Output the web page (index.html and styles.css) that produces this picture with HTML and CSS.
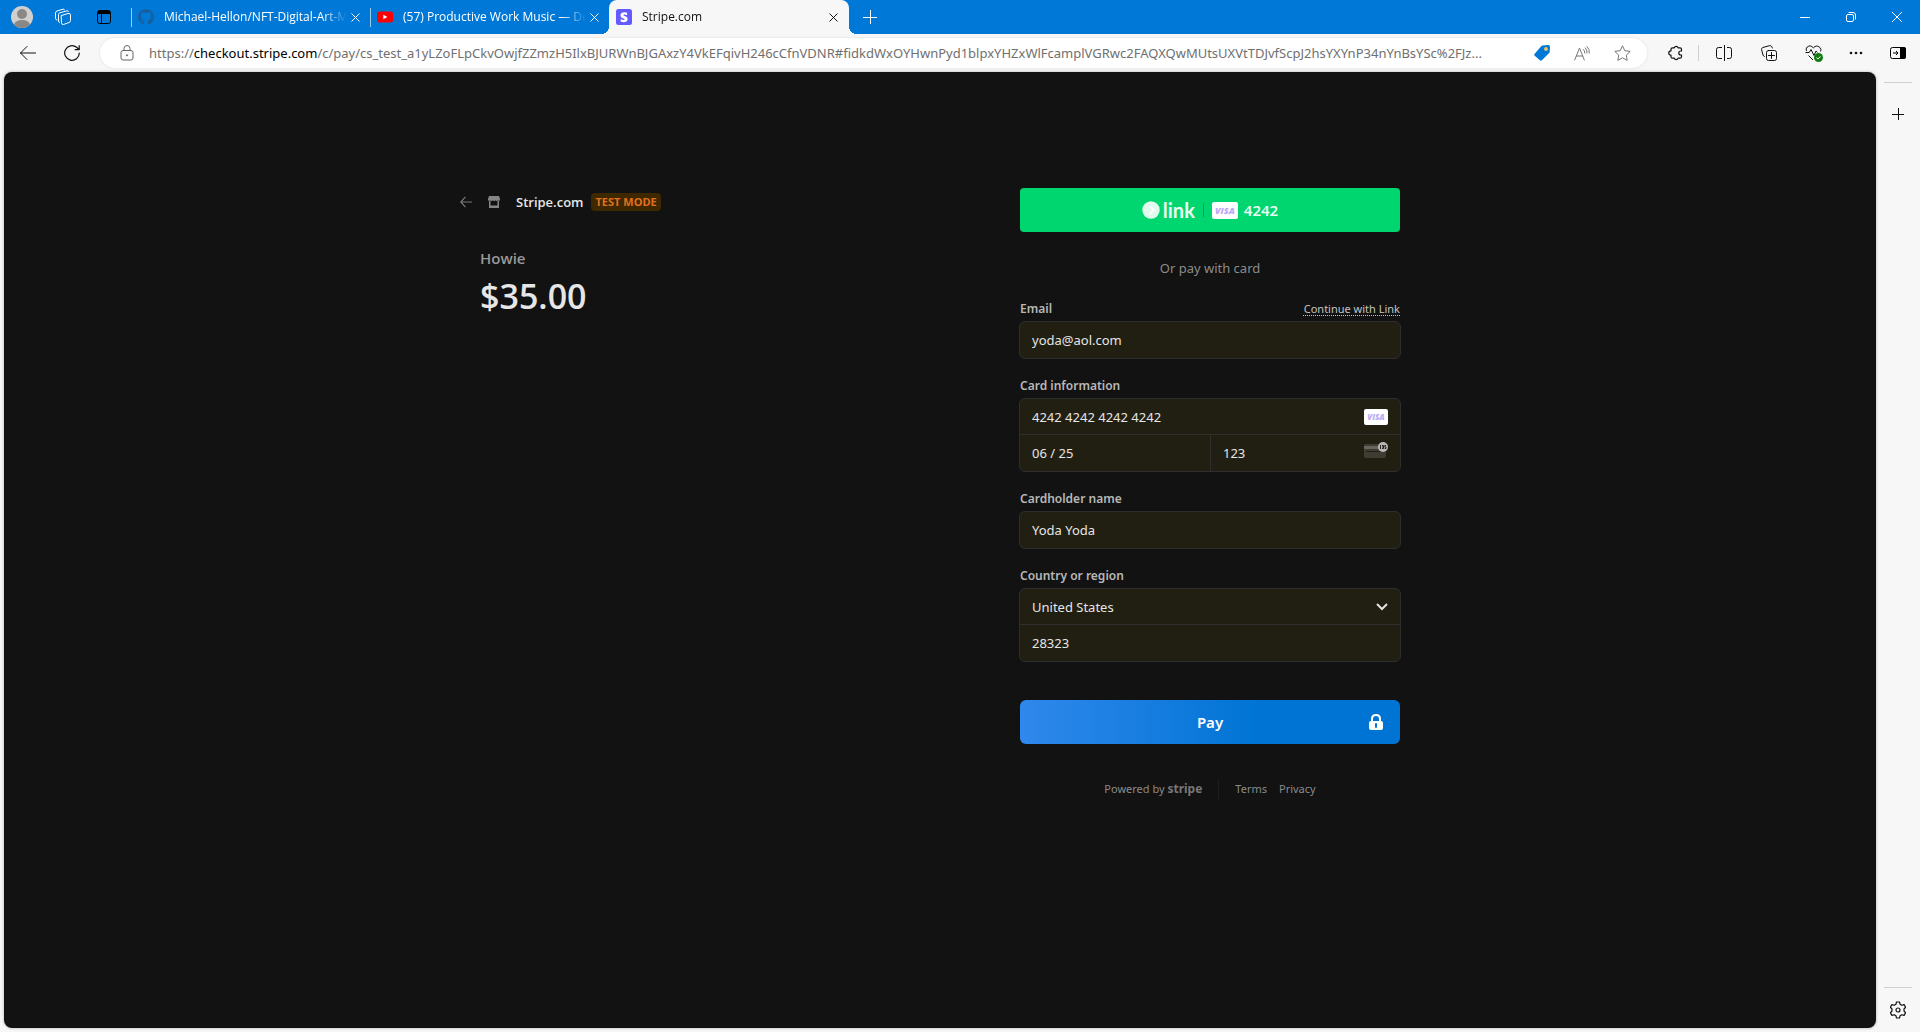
FILE: index.html
```html
<!DOCTYPE html>
<html lang="en">
<head>
<meta charset="utf-8">
<title>Stripe.com</title>
<link rel="stylesheet" href="styles.css">
</head>
<body>
<div class="window">
  <header class="titlebar">
    <button class="title-btn" aria-label="Profile">
      <svg width="22" height="22" viewBox="0 0 22 22"><defs><clipPath id="face"><circle cx="11" cy="11" r="11"/></clipPath></defs><g clip-path="url(#face)"><rect width="22" height="22" fill="#d2d0ce"/><circle cx="11" cy="8" r="5" fill="#8a8886"/><ellipse cx="11" cy="19" rx="8" ry="5" fill="#8a8886"/></g></svg>
    </button>
    <button class="title-btn" aria-label="Workspaces">
      <svg width="18" height="18" viewBox="0 0 18 18" fill="none" stroke="#fff" stroke-linejoin="round" stroke-linecap="round"><path d="M7.500 7.500 14 5.500q2.500-.6 2.500 1.500v5.500q0 1.500-1.500 2l-5.500 2q-2 .5-2-1.500z"/><path d="M5.500 14.500q-1-.2-1-1.500V6.500q0-1.300 1.300-1.700L13 2.800q1-.1 1.300.7M3 12q-1.500-.2-1.500-1.500V5q0-1.500 1.500-2L9 1.200q1-.2 1.500.5"/></svg>
    </button>
    <button class="title-btn" aria-label="Tab actions">
      <svg width="14" height="14" viewBox="0 0 14 14" fill="none" stroke="#000"><rect x=".5" y=".5" width="13" height="13" rx="2"/><path d="M1 2.500h12" stroke-width="3"/><path d="M4.500 4v9"/></svg>
    </button>
    <nav class="tabs" aria-label="Tabs">
      <div class="tab">
        <svg class="favicon" viewBox="0 0 16 16" fill="#17609f"><path d="M8 0C3.580 0 0 3.580 0 8c0 3.540 2.290 6.530 5.470 7.590.4.070.55-.17.55-.38 0-.19-.01-.82-.01-1.490-2.010.37-2.530-.49-2.690-.94-.09-.23-.48-.94-.82-1.130-.28-.15-.68-.52-.01-.53.63-.01 1.080.58 1.230.82.72 1.210 1.870.87 2.330.66.07-.52.28-.87.51-1.070-1.780-.2-3.640-.89-3.640-3.950 0-.87.31-1.590.82-2.150-.08-.2-.36-1.020.08-2.120 0 0 .67-.21 2.200.82.64-.18 1.320-.27 2-.27s1.360.09 2 .27c1.530-1.040 2.200-.82 2.200-.82.44 1.100.16 1.920.08 2.120.51.56.82 1.270.82 2.150 0 3.070-1.870 3.750-3.650 3.950.29.25.54.73.54 1.480 0 1.070-.01 1.930-.01 2.200 0 .21.15.46.55.38A8.010 8.010 0 0 0 16 8c0-4.420-3.580-8-8-8z"/></svg>
        <button class="tab-name">Michael-Hellon/NFT-Digital-Art-M</button>
        <button class="tab-close" aria-label="Close tab"><svg width="9" height="9" viewBox="0 0 9 9" fill="none" stroke="currentColor"><path d="m.5.5 8 8m0-8-8 8"/></svg></button>
      </div>
      <div class="tab">
        <svg class="favicon" viewBox="0 0 16 16"><rect y="2.500" width="16" height="11" rx="2.500" fill="red"/><path d="M6.300 5.700v4.600L10.400 8z" fill="#fff"/></svg>
        <button class="tab-name">(57) Productive Work Music — De</button>
        <button class="tab-close" aria-label="Close tab"><svg width="9" height="9" viewBox="0 0 9 9" fill="none" stroke="currentColor"><path d="m.5.5 8 8m0-8-8 8"/></svg></button>
      </div>
      <div class="tab active">
        <svg class="favicon" viewBox="0 0 16 16"><rect width="16" height="16" rx="2.500" fill="#635bff"/><path d="M7.400 6.200c0-.4.300-.6.900-.6.800 0 1.900.3 2.800.7V3.700a7 7 0 0 0-2.800-.5C6 3.200 4.500 4.400 4.500 6.400c0 3.100 4.200 2.600 4.200 3.900 0 .5-.4.600-1 .6-.9 0-2.100-.4-3-.9v2.600c1 .4 2 .6 3 .6 2.300 0 3.900-1.100 3.900-3.200 0-3.300-4.200-2.700-4.200-3.800z" fill="#fff"/></svg>
        <button class="tab-name">Stripe.com</button>
        <button class="tab-close" aria-label="Close tab"><svg width="9" height="9" viewBox="0 0 9 9" fill="none" stroke="currentColor"><path d="m.5.5 8 8m0-8-8 8"/></svg></button>
      </div>
    </nav>
    <button class="title-btn" aria-label="New tab"><svg width="14" height="14" viewBox="0 0 14 14" fill="none" stroke="#fff"><path d="M7.500 0v14M0 7.500h14"/></svg></button>
    <div class="window-controls">
      <button aria-label="Minimize"><svg width="10" height="10" viewBox="0 0 10 10" fill="none" stroke="#fff"><path d="M0 5.500h10"/></svg></button>
      <button aria-label="Restore"><svg width="10" height="10" viewBox="0 0 10 10" fill="none" stroke="#fff"><rect x=".5" y="2.500" width="7" height="7" rx="1.500"/><path d="M2.500.5H7q2.500 0 2.500 2.500v4.500"/></svg></button>
      <button aria-label="Close"><svg width="10" height="10" viewBox="0 0 10 10" fill="none" stroke="#fff"><path d="m0 0 10 10M10 0 0 10"/></svg></button>
    </div>
  </header>

  <div class="toolbar">
    <button class="tool tool-nav" aria-label="Back"><svg width="16" height="14" viewBox="0 0 16 14" fill="none" stroke="#111" stroke-linecap="round" stroke-linejoin="round"><path d="M7 .5.5 7 7 13.500M.5 7h15"/></svg></button>
    <button class="tool tool-nav" aria-label="Refresh"><svg width="16" height="16" viewBox="0 0 16 16" fill="none" stroke="#111" stroke-width="1.200" stroke-linecap="round" stroke-linejoin="round"><path d="M15.300 8A7.300 7.300 0 1 1 12.600 2.300L15 4.500M15.200.7v4h-4"/></svg></button>
    <div class="address">
      <button class="site-info" aria-label="View site information"><svg width="14" height="16" viewBox="0 0 14 16" fill="none" stroke="#666"><rect x="1" y="5.500" width="12" height="9.500" rx="2"/><path d="M4 5.500V3.500q0-3 3-3t3 3v2"/><circle cx="7" cy="10.300" r=".6" fill="#666"/></svg></button>
      <div class="url">https://<span class="url-host">checkout.stripe.com</span>/c/pay/cs_test_a1yLZoFLpCkvOwjfZZmzH5IlxBJURWnBJGAxzY4VkEFqivH246cCfnVDNR#fidkdWxOYHwnPyd1blpxYHZxWlFcamplVGRwc2FAQXQwMUtsUXVtTDJvfScpJ2hsYXYnP34nYnBsYSc%2FJz...</div>
      <button class="address-btn" aria-label="Shopping"><svg width="16" height="16" viewBox="0 0 16 16"><path d="M8.500.5 14 0q2-.1 2 2l-.3 4.500q0 1-.8 1.800l-7 7q-1 .9-2 0L.7 10.800q-1-1 0-2l6.500-7.500q.5-.7 1.300-.8z" fill="#0078d7"/><circle cx="12" cy="4" r="1.900" fill="#f5c35b"/></svg></button>
      <button class="address-btn" aria-label="Read aloud"><svg width="16" height="15" viewBox="0 0 16 15" fill="none" stroke="#777" stroke-linecap="round"><path d="M.7 14 5.500 2l4.800 12M2.300 10h6.400M9.500 3.500q1.500 1.300 1.300 3.500M11.300 1.900q2.200 2 1.700 5M13 .5q3 2.500 2.300 6.500"/></svg></button>
      <button class="address-btn" aria-label="Add to favorites"><svg width="17" height="16" viewBox="0 0 17 16" fill="none" stroke="#777" stroke-linejoin="round"><path d="m8.500.8 2.300 4.900 5.400.7-3.900 3.700.9 5.300-4.700-2.600-4.700 2.600.9-5.300L.8 6.400l5.400-.7z"/></svg></button>
    </div>
    <button class="tool" aria-label="Extensions"><svg width="16" height="16" viewBox="0 0 16 16" fill="none" stroke="#111" stroke-width="1.200" stroke-linejoin="round"><path d="M3 5.800V4.300q0-1.500 1.500-1.500h1.800a2 2 0 0 1 3.800 0H12q1.500 0 1.500 1.500V6h-.7a2 2 0 0 0 0 4h.7v1.700q0 1.500-1.500 1.500h-1.900a2 2 0 0 1-3.800 0H4.500q-1.500 0-1.500-1.500v-1.500a2.200 2.200 0 0 1 0-4.400z"/></svg></button>
    <span class="tool-divider"></span>
    <button class="tool" aria-label="Split screen"><svg width="16" height="16" viewBox="0 0 16 16" fill="none" stroke="#111"><path d="M8.500 0v16M6 2.500H2.500q-2 0-2 2v7q0 2 2 2H6M11 2.500h2.500q2 0 2 2v7q0 2-2 2H11"/></svg></button>
    <button class="tool" aria-label="Collections"><svg width="16" height="16" viewBox="0 0 16 16" fill="none" stroke="#111" stroke-linecap="round"><rect x="5.500" y="5.500" width="10" height="10" rx="2"/><path d="M10.500 7.500v6M7.500 10.500h6M3.300 11.500q-1-.3-1.300-1.500L.6 4.800Q.2 3 1.800 2.500L8.500.7q1.700-.4 2.300 1L11.300 3"/></svg></button>
    <button class="tool" aria-label="Browser essentials"><svg width="18" height="17" viewBox="0 0 18 17" fill="none" stroke="#111" stroke-linejoin="round"><path d="M1.500 6Q.4 3.800 2.200 2q3.300-2.600 6.100.9 3.200-3.400 6.400-.6 2 2 .9 4.200M3.500 10.500l4.500 4.500M.5 7.500h3.700l1.800-3 3 6 2-4.500 1.500 1.500"/><circle cx="13.500" cy="12.500" r="4.500" fill="#107c10" stroke="none"/><path d="m11.500 12.700 1.400 1.300 2.600-2.600" stroke="#fff"/></svg></button>
    <button class="tool tool-menu" aria-label="Settings and more"><svg width="14" height="4" viewBox="0 0 14 4" fill="#111"><circle cx="2" cy="2" r="1.300"/><circle cx="7" cy="2" r="1.300"/><circle cx="12" cy="2" r="1.300"/></svg></button>
    <button class="tool tool-edge" aria-label="Toggle sidebar"><svg width="16" height="12" viewBox="0 0 16 12"><rect x=".5" y=".5" width="15" height="11" rx="2" fill="none" stroke="#000"/><path d="M10 0h4q2 0 2 2v8q0 2-2 2h-4z"/><path d="M3 6h5M6 4l2 2-2 2" fill="none" stroke="#000"/></svg></button>
  </div>

  <div class="body">
    <main class="page">
      <div class="checkout">
        <section class="summary">
          <div class="merchant">
            <a class="merchant-back" href="#" aria-label="Back"><svg width="12" height="12" viewBox="0 0 12 12" fill="none" stroke="#777" stroke-width="1.200"><path d="M5.500.8.8 6l4.700 5.200M.8 6H12"/></svg></a>
            <svg class="store" width="12" height="12" viewBox="0 0 12 12" fill="#858585"><path d="M1 0h10l1 3v1q-.8 1.300-2 .6-1.300.9-2.600 0-1.400.9-2.800 0-1.300.9-2.600 0-1.200.7-2-.6V3z"/><path d="M1 5h1.500v4.500h7V5H11v7H1z"/></svg>
            <h1 class="merchant-name">Stripe.com</h1>
            <span class="badge">TEST MODE</span>
          </div>
          <h2 class="product">Howie</h2>
          <p class="amount">$35.00</p>
        </section>

        <form class="payment">
          <button class="link-pay" type="button" aria-label="Pay with Link, Visa 4242">
            <svg width="18" height="18" viewBox="0 0 18 18"><circle cx="9" cy="9" r="8.700" fill="#e0fbed"/><path d="M7 4.500h2.500Q10.500 7.500 13.500 9q-3 1.500-4 4.500H7q1-3 3.500-4.500Q8 7.500 7 4.500z" fill="#fff"/></svg>
            <span class="link-word">link</span>
            <span class="link-divider"></span>
            <span class="visa visa-large">VISA</span>
            <span class="last4">4242</span>
          </button>
          <p class="or">Or pay with card</p>

          <div class="group">
            <div class="label-row"><label for="email">Email</label><a href="#" class="continue">Continue with Link</a></div>
            <div class="box"><input id="email" type="email" value="yoda@aol.com"></div>
          </div>

          <div class="group">
            <div class="label-row"><label for="card">Card information</label></div>
            <div class="box">
              <div class="row"><input id="card" value="4242 4242 4242 4242"><span class="visa">VISA</span></div>
              <div class="row split">
                <div class="cell"><input aria-label="Expiration" value="06 / 25"></div>
                <div class="cell"><input aria-label="CVC" value="123">
                  <svg width="24" height="22" viewBox="0 0 24 22"><rect y="2" width="22" height="14" rx="2" fill="#3e3c33"/><path d="M0 4h22v3H0z" fill="#67655e"/><path d="M2 9h14v1H2z" fill="#211f12"/><circle cx="19" cy="5" r="5" fill="#b9b8b4"/><path d="M16.500 3v4M18 3.500h1.500v3H18m0-1.500h1.500M22 3.500h-1.200V5H22v1.500h-1.300" fill="none" stroke="#222"/></svg>
                </div>
              </div>
            </div>
          </div>

          <div class="group">
            <div class="label-row"><label for="name">Cardholder name</label></div>
            <div class="box"><input id="name" value="Yoda Yoda"></div>
          </div>

          <div class="group">
            <div class="label-row"><label for="country">Country or region</label></div>
            <div class="box">
              <div class="row"><select id="country"><option>United States</option></select><svg class="chevron" width="12" height="8" viewBox="0 0 12 8" fill="none" stroke="#e2e2e0" stroke-width="2"><path d="m1 1 5 5 5-5"/></svg></div>
              <div class="row"><input aria-label="ZIP" value="28323"></div>
            </div>
          </div>

          <button class="pay" type="button"><span>Pay</span>
            <svg width="14" height="16" viewBox="0 0 14 16"><path d="M3 8V5q0-4 4-4t4 4v3" fill="none" stroke="#fff" stroke-width="2"/><rect y="7" width="14" height="9" rx="2" fill="#fff"/><path d="M7 10v3" stroke="#0074d4" stroke-width="2" stroke-linecap="round"/></svg>
          </button>

          <footer class="legal">
            <a href="#" class="powered">Powered by <b>stripe</b></a>
            <span class="legal-divider"></span>
            <a href="#">Terms</a>
            <a href="#" class="privacy">Privacy</a>
          </footer>
        </form>
      </div>
    </main>
    <aside class="sidebar">
      <hr>
      <button aria-label="Customize"><svg width="12" height="12" viewBox="0 0 12 12" fill="none" stroke="#111"><path d="M6.500 0v12M0 6.500h12"/></svg></button>
      <hr class="bottom-rule">
      <button aria-label="Settings"><svg width="16" height="18" viewBox="0 0 16 18" fill="none" stroke="#111" stroke-width="1.200" stroke-linejoin="round"><path d="M6.500 1h3l.6 2.300 1.700 1 2.300-.7 1.500 2.600L14 8v2l1.600 1.800-1.500 2.600-2.300-.7-1.700 1L9.500 17h-3l-.6-2.300-1.700-1-2.300.7-1.500-2.600L2 10V8L.4 6.200l1.500-2.600 2.300.7 1.700-1z"/><circle cx="8" cy="9" r="2"/></svg></button>
    </aside>
  </div>
</div>
</body>
</html>
```
FILE: styles.css
```css
* { box-sizing: border-box; }

body {
  margin: 0;
  background: #f7f7f7;
  color: #111;
  font: 12px/16px "Open Sans", "Noto Sans", sans-serif;
}

button, input, select { font: inherit; color: inherit; }
button { padding: 0; border: 0; background: none; }
svg { display: block; flex: none; }
h1, h2, p { margin: 0; }

.window { display: flex; flex-direction: column; min-height: 100vh; }

/* Title bar and tabs */
.titlebar { display: flex; height: 34px; background: #0078d7; color: #fff; }
.title-btn { display: grid; place-items: center; width: 41px; padding-bottom: 1px; }
.title-btn:first-child { margin-left: 1px; }
.tabs { display: flex; margin-left: 7px; }
.tab {
  position: relative;
  display: flex;
  align-items: center;
  width: 239px;
  padding: 0 7px;
}
.tab:not(.active)::before {
  content: "";
  position: absolute;
  left: 0;
  top: 8px;
  width: 1px;
  height: 19px;
  background: #9ccbf0;
}
.tab.active { width: 240px; padding-right: 8px; background: #f7f7f7; color: #111; border-radius: 8px 8px 0 0; }
.tab.active::before, .tab.active::after {
  content: "";
  position: absolute;
  bottom: 0;
  width: 8px;
  height: 8px;
}
.tab.active::before { left: -8px; background: radial-gradient(circle at 0 0, #0078d7 8px, #f7f7f7 8px); }
.tab.active::after { right: -8px; background: radial-gradient(circle at 100% 0, #0078d7 8px, #f7f7f7 8px); }
.favicon { width: 16px; height: 16px; }
.tab-name {
  flex: 1;
  min-width: 0;
  margin: 0 0 0 10px;
  overflow: hidden;
  white-space: nowrap;
  text-align: left;
  mask-image: linear-gradient(90deg, #000 calc(100% - 24px), transparent);
}
.tab-close { display: grid; place-items: center; width: 16px; height: 16px; }
.window-controls { display: flex; margin-left: auto; }
.window-controls button { display: grid; place-items: center; width: 46px; }

/* Toolbar */
.toolbar { display: flex; align-items: center; height: 38px; padding-left: 6px; }
.tool { display: grid; place-items: center; width: 45px; height: 30px; }
.tool-nav { width: 44px; }
.tool-menu { width: 40px; }
.tool-edge { width: 44px; }
.tool-divider { width: 1px; height: 16px; margin-right: 2px; background: #cfcfcf; }
.address {
  display: flex;
  flex: 1;
  align-items: center;
  min-width: 0;
  height: 30px;
  margin: 0 6px;
  padding: 0 5px;
  border-radius: 15px;
  background: #fff;
  box-shadow: 0 0 3px #0000001a;
}
.site-info { display: grid; place-items: center; width: 44px; }
.url {
  flex: 1;
  min-width: 0;
  overflow: hidden;
  white-space: nowrap;
  color: #707070;
  font: 13px/20px "Noto Sans", sans-serif;
}
.url-host { color: #000; }
.address-btn { display: grid; place-items: center; width: 40px; height: 30px; }

/* Page and browser sidebar */
.body { display: flex; flex: 1; padding: 0 0 4px 4px; }
.page {
  flex: 1;
  padding: 116px 24px 40px;
  border-radius: 8px;
  background: #121212;
  box-shadow: 0 0 3px #0000004d;
  color: #e6e6e6;
}
.sidebar { display: flex; flex-direction: column; align-items: center; width: 44px; padding-top: 10px; }
.sidebar hr { width: 28px; margin: 0; border: 0; border-top: 1px solid #cfcfcf; }
.sidebar .bottom-rule { margin-top: auto; }
.sidebar button { display: grid; place-items: center; width: 40px; height: 36px; margin-top: 13px; }
.sidebar .bottom-rule + button { margin-top: 4px; }

.checkout { display: grid; grid-template-columns: 380px 380px; justify-content: center; gap: 160px; }

/* Order summary */
.merchant { display: flex; align-items: center; height: 28px; margin-left: -20px; }
.store { margin: 0 16px; }
.merchant-name { font-size: 13px; line-height: 20px; font-weight: 600; }
.badge {
  margin-left: 8px;
  padding: 1px 4px;
  border-radius: 4px;
  background: #3d2800;
  color: #e36f1e;
  font-size: 11px;
  font-weight: 700;
}
.product { margin-top: 30px; color: #999; font-size: 15px; line-height: 24px; font-weight: 600; }
.amount { margin-top: 4px; font-size: 34px; line-height: 44px; font-weight: 600; }

/* Payment form */
.payment { display: flex; flex-direction: column; font-family: "Noto Sans", sans-serif; }
.link-pay {
  display: flex;
  align-items: center;
  justify-content: center;
  height: 44px;
  border-radius: 4px;
  background: #00d66f;
  color: #e9fff3;
}
.link-word { margin-left: 3px; font: 700 20px/24px Lato, sans-serif; }
.link-divider { width: 1px; height: 14px; margin: 0 8px; background: #00a355; }
.last4 { margin-left: 6px; font-size: 15px; font-weight: 600; }
.visa {
  flex: none;
  width: 24px;
  border-radius: 2px;
  background: #fff;
  color: #bba8f7;
  font: italic 800 8px/16px "Open Sans", sans-serif;
  text-align: center;
}
.visa-large { width: 26px; font-size: 9px; line-height: 17px; }
.or { margin: 26px 0 4px; color: #8c8c8c; font-size: 13px; line-height: 20px; text-align: center; }

.group { margin-top: 19px; }
.label-row { display: flex; justify-content: space-between; margin-bottom: 4px; color: #b8b8b8; font-size: 12px; }
.label-row label { font-weight: 600; }
.continue { color: #c4c4c4; font-size: 11px; text-decoration: underline dotted; text-underline-offset: 2px; }
.box {
  margin: 0 -1px;
  overflow: hidden;
  border: 1px solid #2e2e2e;
  border-radius: 6px;
  background: #211f12;
  font-size: 13px;
}
.box input, .box select {
  display: block;
  width: 100%;
  min-width: 0;
  height: 36px;
  padding: 0 12px;
  border: 0;
  outline: 0;
  appearance: none;
  background: transparent;
}
.row { display: flex; align-items: center; }
.row + .row { border-top: 1px solid #2e2e2e; }
.row > .visa, .cell > svg { margin-right: 12px; }
.row:first-child input, .row:first-child select { height: 35px; }
.split { display: grid; grid-template-columns: 1fr 1fr; }
.cell { display: flex; align-items: center; }
.cell + .cell { border-left: 1px solid #2e2e2e; }
.chevron { margin-right: 12px; }

.pay {
  display: grid;
  grid-template-columns: 1fr auto 1fr;
  align-items: center;
  height: 44px;
  margin-top: 38px;
  padding: 0 17px;
  border-radius: 6px;
  background: linear-gradient(90deg, #3088ec, #0074d4 63%);
  color: #fff;
  font-size: 15px;
  font-weight: 600;
}
.pay span { grid-column: 2; }
.pay svg { justify-self: end; }

.legal { display: flex; align-items: center; justify-content: center; margin-top: 35px; font-size: 11px; }
.legal a { color: #8a8a8a; text-decoration: none; }
.powered b { color: #777; font-size: 12px; font-weight: 700; }
.legal-divider { width: 1px; height: 20px; margin: 0 16px; background: #1e1e1e; }
.privacy { margin-left: 12px; }
```
